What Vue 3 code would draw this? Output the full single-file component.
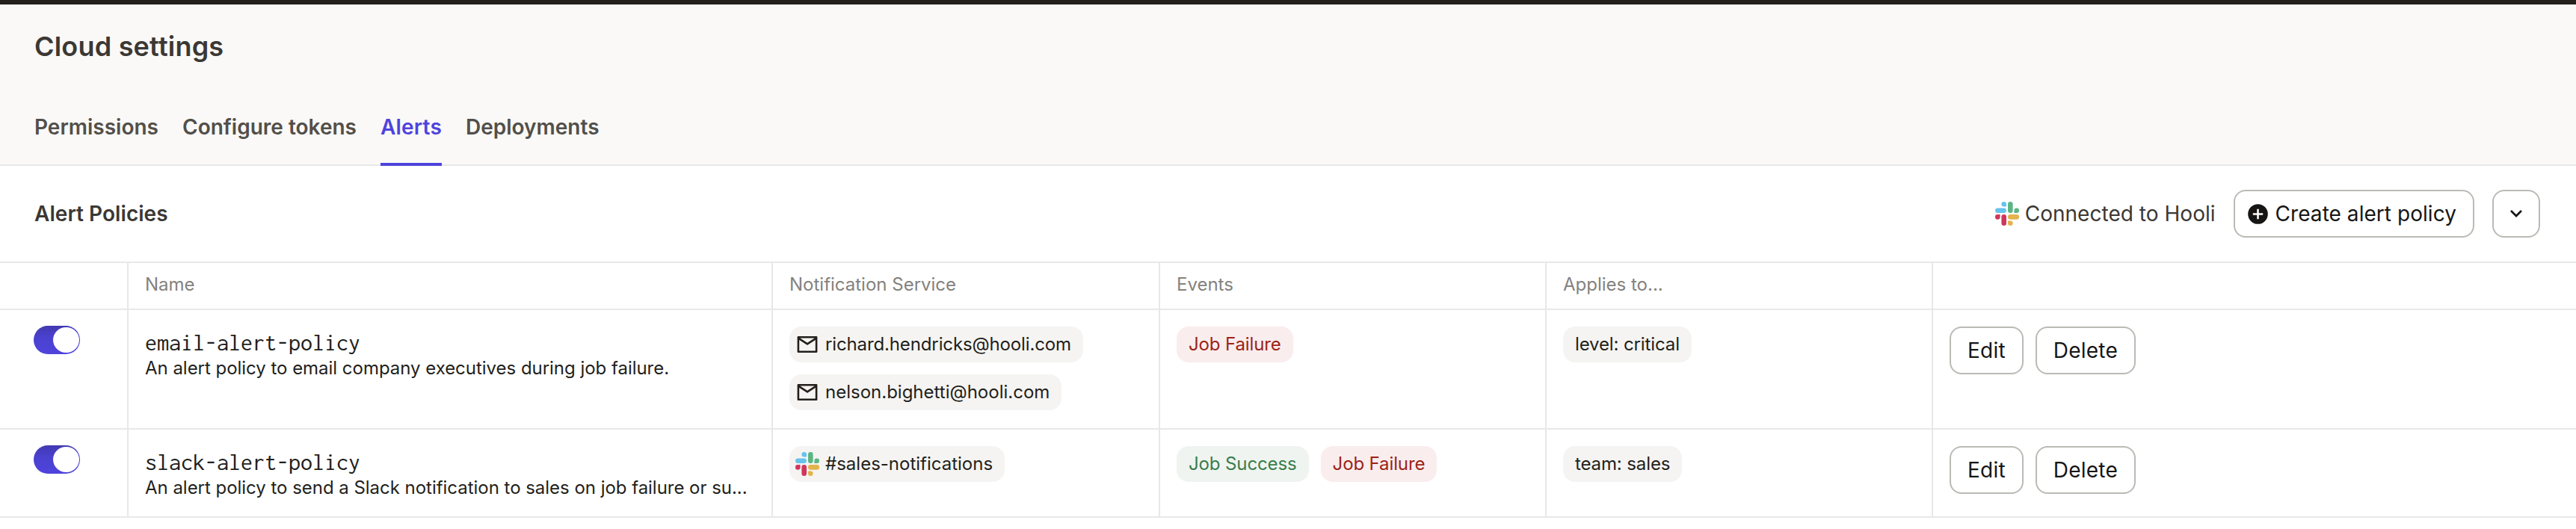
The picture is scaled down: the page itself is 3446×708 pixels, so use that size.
<script setup>
const slackLogo = [
  ['#66c3ec', 'M11.7 0a3.3 3.3 0 1 0 0 6.6H15V3.3A3.3 3.3 0 0 0 11.7 0ZM3.3 8.6H11.7a3.1 3.1 0 0 1 0 6.4H3.3a3.1 3.1 0 0 1 0-6.4Z'],
  ['#5cb583', 'M17 3.3a3.3 3.3 0 0 1 6.6 0V11.7a3.3 3.3 0 0 1-6.6 0ZM25.4 11.7a3.3 3.3 0 1 1 3.3 3.3H25.4Z'],
  ['#e3b34c', 'M28.7 17.1a3.3 3.3 0 0 1 0 6.6H20.3a3.3 3.3 0 0 1 0-6.6ZM20.3 25.4a3.3 3.3 0 1 1-3.3 3.3V25.4Z'],
  ['#d0365d', 'M15 28.7a3.3 3.3 0 0 1-6.6 0V20.4a3.3 3.3 0 0 1 6.6 0ZM6.6 20.4a3.3 3.3 0 1 1-3.3-3.3H6.6Z'],
]
const tabs = ['Permissions', 'Configure tokens', 'Alerts', 'Deployments']
const heads = ['', 'Name', 'Notification Service', 'Events', 'Applies to...', '']
const rows = [
  {
    name: 'email-alert-policy',
    text: 'An alert policy to email company executives during job failure.',
    via: 'mail',
    services: ['richard.hendricks@hooli.com', 'nelson.bighetti@hooli.com'],
    events: [['Job Failure', 'red']],
    target: 'level: critical',
  },
  {
    name: 'slack-alert-policy',
    text: 'An alert policy to send a Slack notification to sales on job failure or su...',
    via: 'slack',
    services: ['#sales-notifications'],
    events: [['Job Success', 'green'], ['Job Failure', 'red']],
    target: 'team: sales',
  },
]
</script>

<template>
  <div class="page">
    <header class="top">
      <h1>Cloud settings</h1>
      <nav class="tabs">
        <a v-for="t in tabs" :key="t" class="tab" :class="{ active: t === 'Alerts' }">{{ t }}</a>
      </nav>
    </header>
    <section class="bar">
      <h2>Alert Policies</h2>
      <div class="actions">
        <div class="connected">
          <svg class="icon" viewBox="0 0 32 32"><path v-for="p in slackLogo" :key="p[0]" :fill="p[0]" :d="p[1]" /></svg>
          <span>Connected to Hooli</span>
        </div>
        <button class="btn create">
          <svg class="plus" viewBox="0 0 27 27"><circle cx="13.5" cy="13.5" r="13.3" fill="#171615" /><path d="M13.5 6.8v13.4M6.8 13.5h13.4" stroke="#fff" stroke-width="2.5" /></svg>
          <span>Create alert policy</span>
        </button>
        <button class="btn caret">
          <svg width="16" height="10" viewBox="0 0 16 10"><path d="M1 1l7 7 7-7" fill="none" stroke="#171615" stroke-width="2.7" /></svg>
        </button>
      </div>
    </section>
    <div class="grid head">
      <div v-for="(h, i) in heads" :key="i" class="cell">{{ h }}</div>
    </div>
    <div v-for="r in rows" :key="r.name" class="grid row" :class="'row-' + r.via">
      <div class="cell toggle-cell"><div class="toggle"><i></i></div></div>
      <div class="cell name-cell">
        <div class="mono">{{ r.name }}</div>
        <div class="desc">{{ r.text }}</div>
      </div>
      <div class="cell services">
        <div v-for="(s, i) in r.services" :key="s" class="tag with-icon" :class="{ tight: r.via === 'mail' && i === 0 }">
          <svg v-if="r.via === 'mail'" class="icon" viewBox="0 0 32 32"><path fill="none" stroke="#231f1b" stroke-width="2.6" stroke-linejoin="round" d="M3.9 6.3h24.2v19.4H3.9ZM4 7.6l12 7.8 12-7.8" /></svg>
          <svg v-else class="icon" viewBox="0 0 32 32"><path v-for="p in slackLogo" :key="p[0]" :fill="p[0]" :d="p[1]" /></svg>
          <span>{{ s }}</span>
        </div>
      </div>
      <div class="cell events">
        <div v-for="e in r.events" :key="e[0]" class="tag" :class="e[1]">{{ e[0] }}</div>
      </div>
      <div class="cell"><div class="tag">{{ r.target }}</div></div>
      <div class="cell buttons">
        <button class="btn">Edit</button>
        <button class="btn">Delete</button>
      </div>
    </div>
  </div>
</template>

<style>
body { margin: 0; background: #fff; }
</style>

<style scoped>
* { box-sizing: border-box; }
.page { width: 3446px; height: 708px; overflow: hidden; background: #fff; font-family: Inter, sans-serif; color: #231f1b; }
.top { height: 222px; border-top: 6px solid #231f1b; border-bottom: 2px solid #e8e8e8; background: #faf9f7; padding: 32px 46px 0; display: flex; flex-direction: column; justify-content: space-between; }
h1 { margin: 0; font-size: 36px; line-height: 48px; font-weight: 600; letter-spacing: 0.2px; color: #3b3834; }
.tabs { display: flex; gap: 32px; height: 98px; margin-bottom: -2px; }
.tab { font-size: 28px; line-height: 40px; padding-top: 26px; font-weight: 600; color: #524f4a; }
.tab.active { color: #4f43dd; border-bottom: 4px solid #4f43dd; letter-spacing: 0.18px; }
.bar { height: 128px; padding: 0 48px 0 46px; display: flex; align-items: center; justify-content: space-between; }
h2 { margin: 0; font-size: 28px; line-height: 40px; font-weight: 600; letter-spacing: 0.05px; color: #3b3834; }
.actions { display: flex; gap: 24px; align-items: center; }
.connected { display: flex; align-items: center; gap: 8px; font-size: 28px; letter-spacing: 0.03px; color: #3b3834; }
.icon { width: 32px; height: 32px; flex: none; }
.btn { height: 64px; border: 2px solid #bbbab5; border-radius: 16px; background: #fff; font: 28px/40px Inter, sans-serif; letter-spacing: 0.22px; color: #171615; padding: 0 22px; white-space: nowrap; }
.create { display: flex; align-items: center; gap: 10px; padding: 0 22px 0 17px; letter-spacing: 0.05px; }
.plus { width: 27px; height: 27px; }
.caret { width: 64px; padding: 0; display: flex; align-items: center; justify-content: center; }
.grid { display: grid; grid-template-columns: 172px 862px 518px 517px 517px 1fr; }
.head { height: 65px; border-top: 2px solid #e8e8e8; border-bottom: 2px solid #e8e8e8; font-size: 24px; line-height: 32px; color: #84827d; }
.head .cell { padding: 13px 22px; }
.cell { border-right: 2px solid #e8e8e8; padding: 22px; min-width: 0; }
.cell:last-child { border-right: 0; }
.row { border-bottom: 2px solid #e8e8e8; }
.row-mail { height: 160px; }
.row-slack { height: 118px; }
.toggle-cell { padding: 21px 0 0 45px; }
.toggle { width: 62px; height: 38px; border-radius: 19px; padding: 2px 1.5px; background: linear-gradient(#4239b0, #4a41cf 40%, #4f43dd); display: flex; justify-content: flex-end; }
.toggle i { width: 34.5px; height: 34px; border-radius: 50%; background: #fff; }
.mono { font: 32px/36px "Inconsolata", "Noto Sans Mono CJK SC", monospace; margin-top: 4px; }
.desc { font-size: 24px; line-height: 32px; letter-spacing: -0.03px; white-space: nowrap; }
.services { display: flex; flex-direction: column; align-items: flex-start; gap: 16px; }
.events { display: flex; gap: 16px; align-items: flex-start; }
.tag { width: fit-content; height: 48px; border-radius: 16px; padding: 8px 16px; font-size: 24px; line-height: 32px; letter-spacing: -0.12px; background: #f5f4f2; white-space: nowrap; }
.with-icon { display: flex; gap: 8px; padding-left: 8px; letter-spacing: 0; }
.tight { letter-spacing: -0.13px; }
.red { background: #f9eded; color: #9d2318; }
.green { background: #eff4f0; color: #397c4c; }
.buttons { display: flex; gap: 16px; align-items: flex-start; }
</style>
